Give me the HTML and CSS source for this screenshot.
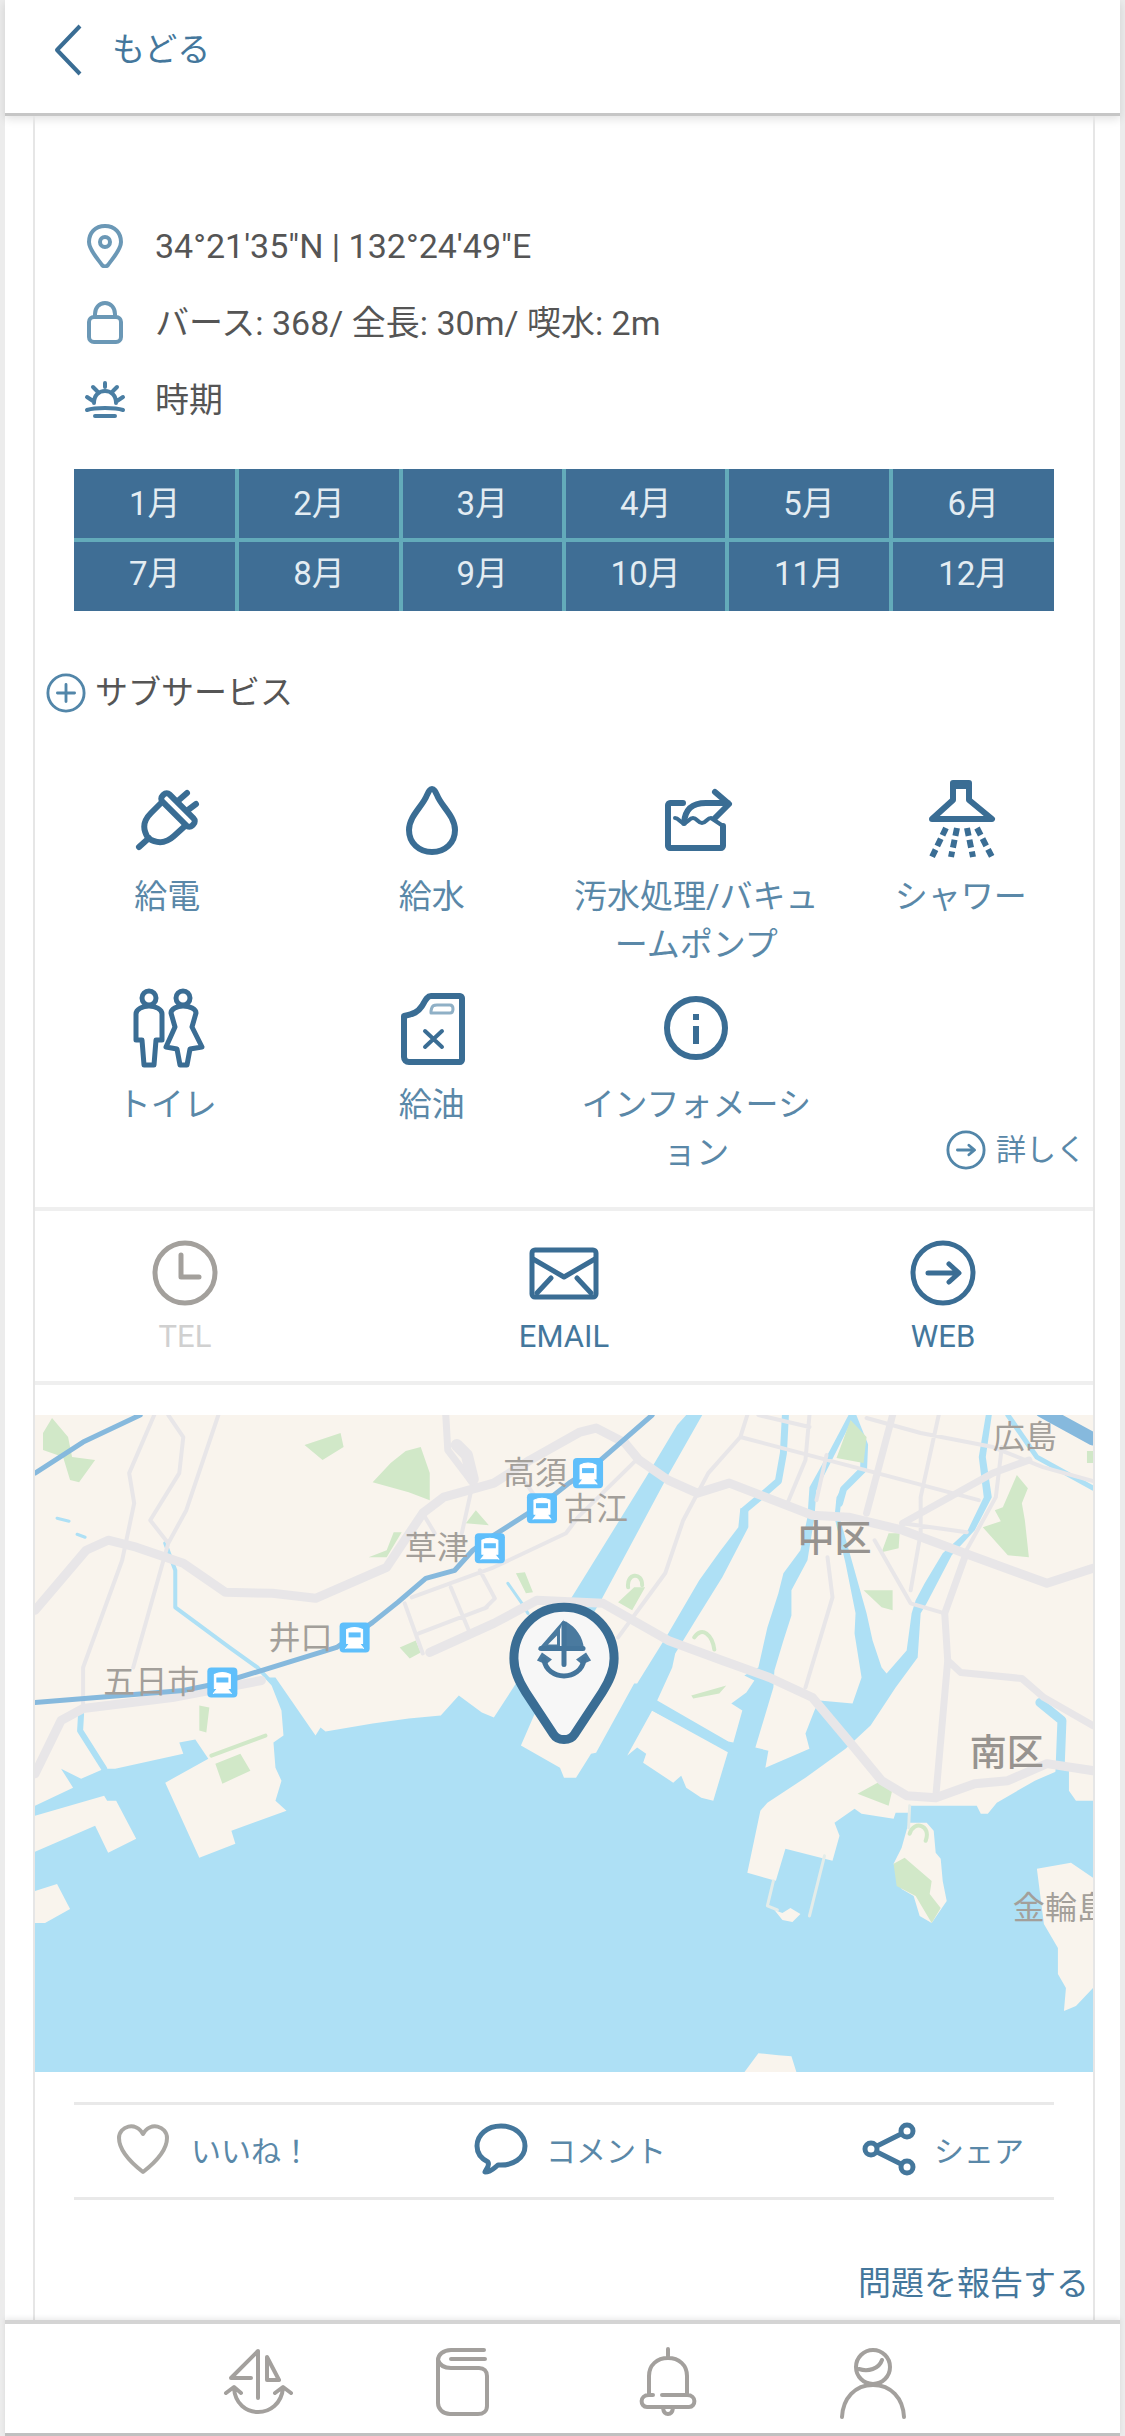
FILE: index.html
```html
<!DOCTYPE html>
<html lang="ja">
<head>
    <meta charset="UTF-8">
    <meta name="viewport" content="width=device-width, initial-scale=1.0">
    <title>マリーナ情報</title>
    <link rel="stylesheet" href="styles.css">
</head>
<body>
    <div class="page">
        <header class="topbar">
            <a href="#" class="back">
                <svg class="icon-back" viewBox="0 0 28 52"><path d="M26 2L3 26l23 24"/></svg>
                もどる
            </a>
        </header>

        <main class="card">
            <ul class="info">
                <li>
                    <svg class="icon-info" viewBox="0 0 44 44"><path d="M22 2C12 2 6 9 6 18c0 8 9 17 13 23 2 2 4 2 6 0 4-6 13-15 13-23C38 9 32 2 22 2z"/><circle cx="22" cy="18" r="5"/></svg>
                    <span>34°21'35"N | 132°24'49"E</span>
                </li>
                <li>
                    <svg class="icon-info" viewBox="0 0 44 44"><rect x="6" y="16" width="32" height="25" rx="5"/><path d="M12 16v-3c0-6 4-11 10-11s10 5 10 11v3"/></svg>
                    <span>バース: 368/ 全長: 30m/ 喫水: 2m</span>
                </li>
                <li>
                    <svg class="icon-info icon-sun" viewBox="0 0 44 44"><path d="M11 25c0-8 5-12 11-12s11 4 11 12M22 5v4M10 9l4 4M34 9l-4 4M4 19l6 4M40 19l-6 4M4 32c6-2 12-2 18-2s12 0 18 2M12 38h20"/></svg>
                    <span>時期</span>
                </li>
            </ul>

            <table class="months">
                <tr><td>1月</td><td>2月</td><td>3月</td><td>4月</td><td>5月</td><td>6月</td></tr>
                <tr><td>7月</td><td>8月</td><td>9月</td><td>10月</td><td>11月</td><td>12月</td></tr>
            </table>

            <h2 class="subtitle">
                <svg class="icon-small" viewBox="0 0 42 42"><circle cx="21" cy="21" r="19"/><path d="M21 12v18M12 21h18"/></svg>
                サブサービス
            </h2>

            <div class="services">
                <div class="service">
                    <svg class="icon-service" viewBox="0 0 80 80"><rect x="-21" y="-5" width="42" height="10" rx="4" transform="translate(51 30) rotate(45)"/><path d="M33 24l-9 9C14 43 17 51 21 58c9 6 17 6 26-2l11-10M22 58l-10 9M52 20l8-7M61 30l8-6"/></svg>
                    <span>給電</span>
                </div>
                <div class="service">
                    <svg class="icon-service" viewBox="0 0 80 80"><path d="M40 9c-2 0-3 2-5 6-4 11-18 21-18 35 0 13 10 22 23 22s23-9 23-22c0-14-14-24-18-35-2-4-3-6-5-6z"/></svg>
                    <span>給水</span>
                </div>
                <div class="service">
                    <svg class="icon-service" viewBox="0 0 80 80"><path d="M27 23H14c-1 0-2 1-2 2v41c0 1 1 2 2 2h51c1 0 2-1 2-2V46"/><path d="M28 43c1-14 8-20 22-20h22M59 12l14 12-14 14"/><path class="thin" d="M19 38c4 0 5 5 9 5s5-5 9-5 5 5 9 5 5-5 9-5l12 8"/></svg>
                    <span>汚水処理/バキュームポンプ</span>
                </div>
                <div class="service">
                    <svg class="icon-service" viewBox="0 0 80 80"><path d="M32 3h16v17l23 19H11l21-19z"/><path d="M32 6h16"/><path class="spray" d="M25 48L11 77M36 48l-6 29M46 48l6 29M56 48l15 29"/></svg>
                    <span>シャワー</span>
                </div>
                <div class="service">
                    <svg class="icon-service" viewBox="0 0 80 80"><g class="wc"><circle cx="22" cy="10" r="7"/><path d="M22 18c-6 0-13 3-13 8v26h6l2 25h10l2-25h6V26c0-5-7-8-13-8z"/><circle cx="56" cy="10" r="7"/><path d="M56 18c-6 0-12 3-12 7l4 14-9 20 11 2 3 16h7l3-16 12-2-10-20 4-14c0-4-6-7-13-7z"/></g></svg>
                    <span>トイレ</span>
                </div>
                <div class="service">
                    <svg class="icon-service" viewBox="0 0 80 80"><path d="M12 28c10-2 14-4 18-10 3-5 5-10 9-10h29c1 0 2 1 2 2v62c0 1-1 2-2 2H17c-3 0-5-2-5-5z"/><path class="thin" d="M33 43l17 16M50 43L33 59"/><path class="handle" d="M39 23c1-6 3-6 6-6h13c4 0 4 8 0 8H39z"/></svg>
                    <span>給油</span>
                </div>
                <div class="service">
                    <svg class="icon-service" viewBox="0 0 80 80"><circle cx="40" cy="40" r="29"/><path class="stem" d="M40 38v18M40 26v6"/></svg>
                    <span>インフォメーション</span>
                </div>
                <a href="#" class="more">
                    <svg class="icon-small" viewBox="0 0 42 42"><circle cx="21" cy="21" r="19"/><path d="M12 21h17M24 16l6 5-6 5"/></svg>
                    詳しく
                </a>
            </div>

            <div class="contact">
                <a class="off" href="#">
                    <svg class="icon-contact" viewBox="0 0 70 70"><circle cx="35" cy="35" r="30"/><path d="M31 17v22h18"/></svg>
                    TEL
                </a>
                <a href="#">
                    <svg class="icon-contact" viewBox="0 0 70 70"><rect x="3" y="12" width="64" height="47" rx="3"/><path d="M4 21l31 18 31-18M22 40L8 55M48 40l14 15"/></svg>
                    EMAIL
                </a>
                <a href="#">
                    <svg class="icon-contact" viewBox="0 0 70 70"><circle cx="35" cy="35" r="30"/><path d="M20 35h30M41 26l10 9-10 9"/></svg>
                    WEB
                </a>
            </div>

            <svg class="map" viewBox="0 0 1056 656" role="img" aria-label="地図">
                <rect class="land" width="1056" height="656"/>

                <!-- sea and wide rivers -->
                <path class="water" d="M0 390L38 372 26 353 46 363 69 353 80 353 148 338 144 327 160 324 173 343 130 367 164 442 200 428 196 415 251 395 240 385 246 365 240 352 238 327 248 320 246 295 233 262 240 262 280 320 285 312 290 316 337 308 373 303 405 300 423 280 446 297 458 302 480 268 537 180 610 62 641 10 650 0 666 0 632 60 565 185 498 300 485 330 524 352 528 362 540 362 555 338 560 337 598 268 601 268 632 218 663 165 683 137 702 112 704 93 712 93 712 112 686 162 661 202 639 238 636 252 621 285 692 326 697 327 706 295 695 288 710 277 718 265 708 260 722 252 731 212 742 178 747 158 764 135 771 102 773 72 792 38 812 0 818 0 797 42 780 75 778 102 771 145 755 175 755 200 747 225 738 255 737 272 719 332 732 335 729 352 773 333 769 318 778 295 783 285 816 288 825 262 818 218 819 198 809 148 798 102 800 82 806 72 803 102 816 148 830 198 836 225 845 252 850 258 870 235 875 198 879 185 888 168 906 138 931 115 947 82 942 42 949 0 955 0 949 42 955 82 938 115 915 140 890 188 884 198 881 242 859 272 834 310 809 333 769 362 731 387 724 395 711 457 740 465 737 473 749 433 796 445 803 420 798 407 818 393 825 398 857 403 859 397 873 397 873 390 940 390 944 398 951 398 960 387 998 365 1021 355 1032 355 1032 375 1039 385 1056 385 1056 656 0 656z"/>
                <path class="land" d="M616 295L591 340 601 332 610 338 607 347 637 367 645 360 650 372 665 382 677 385 692 335z"/>
                <path class="land" d="M0 400L69 380 72 385 81 385 101 423 73 437 60 410 0 436zM0 475L22 468 35 493 10 507 0 507zM708 656L722 637 742 639 755 640 760 656zM872 407L890 407 897 415 899 437 904 443 906 465 910 485 895 507 883 500 877 480 865 473 857 448 865 432zM1000 453L1034 447 1056 462V572L1039 590 1027 595 1029 572 1021 558 1021 532 1007 508zM738 494l8 3 8-5 10 6-8 8-10-2z"/>
                <path class="pier" d="M788 440L773 500M873 390l-1 22M737 465l-6 25 10 4"/>

                <!-- narrow water -->
                <g class="stream">
                    <path d="M749 0l-2 38-5 28-22 19-12 10" stroke-width="7"/>
                    <path d="M816 0l12 30-1 24-20 20-4 14" stroke-width="7"/>
                    <path d="M971 0l29 42 56 31" stroke-width="5"/>
                    <path d="M1003 287l22 18-2 52" stroke-width="9"/>
                    <path d="M130 128l10 27v37l54 40 28 20 15 16" stroke-width="4"/>
                    <path d="M46 298l-1 17 24 38" stroke-width="6"/>
                    <path d="M616 290l80 44" stroke-width="9"/>
                    <path d="M472 168l14 20 6 10M50 122l-8-3M22 103l12 3" stroke-width="3"/>
                </g>

                <!-- parks -->
                <path class="park" d="M8 18L17 3 33 22 37 42 60 45 44 67 35 65 28 42 8 35zM269 30L305 18 308 32 287 45zM337 67L355 48 370 36 385 32 394 58 394 85 373 77zM430 108L440 95 453 110zM333 142L351 135 358 117 366 117 351 142zM480 158L489 157 497 177 490 178zM364 232L380 225 385 237 374 243zM164 290L174 292 171 317 164 315zM180 348L205 338 215 355 187 368zM814 5L830 22 827 48 800 43zM980 60L991 73 985 88 988 105 992 142 971 140 946 112 964 106 958 95 966 92zM852 118h11l-1 15-17 4zM827 175L856 175 856 195 845 192zM582 187L598 172 609 172 596 195zM655 280L690 270 683 278 657 283zM821 378L841 367 856 373 852 390zM857 448L868 442 895 465 893 478 904 492 895 507 879 480 860 470zM1050 36h6v12h-6z"/>
                <path class="park-line" d="M176 340l54-20M873 418c4-14 22-9 16 7M658 222c8-12 18-2 20 12M592 172c-2-14 14-16 14-2"/>

                <!-- roads -->
                <g class="road">
                    <path d="M119 0L94 58l5 30-12 57-39 107v40M133 0l15 22-4 36-29 47 18 23-35 124M183 0l-32 95-18 33M369 188l18 50M376 182l82-30 72-34 12-16 58-57M415 172l18 43M383 218l68-26M444 155l15 28-10 10M426 118l11-50M387 98l12 20M490 68l15 22M711 0l-7 22-32 36-25 47-18 53-47 64M773 0l-4 45-18 43M722 0l51 12M830 3l54 15 72 14 50 20 50 14M704 22l144 38 94 25M902 0l-18 82v36l-10 57M791 142l5 40-27 90M838 125l36 63 34 10M866 108l64 9M790 40l-10 45M965 32l-6 50-31 56" stroke-width="4"/>
                    <path d="M856 0l-26 98M928 142l-20 56 3 47-12 137M911 245l13 12 61 6 22 19 49 28M866 108l90-50 36-13M410 0l2 35 25 33" stroke-width="7"/>
                    <path d="M0 195l51-60 22-10 28 7 47 16 42 29 47 1 43 5 71-31 36-54 21-16 50-14 36-23 50-28 16-4 29 15 14 17 29 20 29 13 32-10 83 32 36 2 54 13 62 23 82 30 46-15" stroke-width="9"/>
                    <path d="M0 358l26-53 22-12 89-11 89-17M394 237l64-29 43-23 66 3 65 37 54 20 47 17 43 20 36 43 33 40 25 15 29 2 39-14 33-3 39-17 46 7" stroke-width="9"/>
                    <path d="M421 30l10 10 6 24" stroke-width="12"/>
                </g>

                <!-- railway -->
                <path class="rail" d="M0 58l48-31L105 0M0 287l148-12 39-8 114-35 36-25 25-20 28-24 29-8 18-20 18-13 50-32 28-22 20-13L616 0"/>
                <path class="rail rail-wide" d="M1005 -4L1056 24"/>

                <!-- stations -->
                <g>
                    <g transform="translate(187 267)"><rect class="st" x="-15" y="-15" width="30" height="30" rx="4"/><path class="train" d="M-8-8q8-4 16 0V6H-8zM-9 11l4-5H5l4 5"/><path class="window" d="M-6-5H6v5H-6z"/></g>
                    <g transform="translate(319 222)"><rect class="st" x="-15" y="-15" width="30" height="30" rx="4"/><path class="train" d="M-8-8q8-4 16 0V6H-8zM-9 11l4-5H5l4 5"/><path class="window" d="M-6-5H6v5H-6z"/></g>
                    <g transform="translate(454 133)"><rect class="st" x="-15" y="-15" width="30" height="30" rx="4"/><path class="train" d="M-8-8q8-4 16 0V6H-8zM-9 11l4-5H5l4 5"/><path class="window" d="M-6-5H6v5H-6z"/></g>
                    <g transform="translate(506 93)"><rect class="st" x="-15" y="-15" width="30" height="30" rx="4"/><path class="train" d="M-8-8q8-4 16 0V6H-8zM-9 11l4-5H5l4 5"/><path class="window" d="M-6-5H6v5H-6z"/></g>
                    <g transform="translate(552 58)"><rect class="st" x="-15" y="-15" width="30" height="30" rx="4"/><path class="train" d="M-8-8q8-4 16 0V6H-8zM-9 11l4-5H5l4 5"/><path class="window" d="M-6-5H6v5H-6z"/></g>
                </g>

                <g class="place">
                    <text x="68" y="277">五日市</text>
                    <text x="233" y="234">井口</text>
                    <text x="369" y="144">草津</text>
                    <text x="467" y="69">高須</text>
                    <text x="528" y="105">古江</text>
                    <text x="956" y="33">広島</text>
                    <text x="976" y="503">金輪島</text>
                </g>
                <g class="ward">
                    <text x="761" y="137">中区</text>
                    <text x="933" y="350">南区</text>
                </g>

                <!-- marina pin -->
                <path class="pin" d="M528 192c-29 0-50 23-50 51 0 13 5 23 12 34l27 41c5 8 17 8 22 0l27-41c7-11 12-21 12-34 0-28-21-51-50-51z"/>
                <path class="pin-fill" d="M528 204l-26 30h22v-20zM530 206c10 6 17 15 18 28h-18zM501 245l5-8 10 7-6 5zM555 245l-5-8-10 7 6 5z"/>
                <path class="pin-line" d="M528 208v41M508 244c3 22 37 22 40 0M505 233h42"/>
                <path class="pin-sail" d="M521 220v9h-9z"/>
            </svg>

            <div class="actions">
                <button type="button">
                    <svg class="icon-action grey" viewBox="0 0 54 54"><path d="M27 50C18 43 3 30 3 16 3 4 20-1 27 12 34-1 51 4 51 16c0 14-15 27-24 34z"/></svg>
                    いいね！
                </button>
                <button type="button">
                    <svg class="icon-action" viewBox="0 0 54 54"><path d="M27 4C13 4 3 13 3 24c0 8 5 13 11 16 2 4-2 7-3 10 6 0 9-4 13-7 15 1 27-7 27-19C51 13 41 4 27 4z"/></svg>
                    コメント
                </button>
                <button type="button">
                    <svg class="icon-action" viewBox="0 0 54 54"><circle cx="9" cy="27" r="6"/><circle cx="45" cy="9" r="6"/><circle cx="45" cy="45" r="6"/><path d="M15 24l24-12M15 30l24 12"/></svg>
                    シェア
                </button>
            </div>

            <a href="#" class="report">問題を報告する</a>
        </main>

        <nav class="tabbar">
            <a href="#" aria-label="マリーナ"><svg class="icon-tab" viewBox="0 0 72 72"><path d="M29 31H9L36 4v47M45 10l12 23H45zM12 41c2 32 46 32 49 0M4 46l8-6 7 6M53 46l8-6 8 6"/></svg></a>
            <a href="#" aria-label="ログブック"><svg class="icon-tab" viewBox="0 0 72 72"><path d="M57 3H24C16 3 11 8 11 13v43c0 6 5 11 12 11h28c5 0 9-3 9-8V29c0-5-3-8-8-8H24c-6 0-11-2-13-8M24 12h34"/></svg></a>
            <a href="#" aria-label="通知"><svg class="icon-tab" viewBox="0 0 72 72"><path d="M36 2v8M21 48h-4V29c0-11 8-18 19-18s19 7 19 18v19H30M17 48c-10 0-9 12-2 12h42c7 0 8-12-2-12M31 61c1 8 9 8 10 0"/></svg></a>
            <a href="#" aria-label="プロフィール"><svg class="icon-tab" viewBox="0 0 72 72"><circle cx="36" cy="20" r="17"/><path d="M22 22c9 3 20 0 23-9M5 70c1-19 13-32 31-32s30 13 31 32"/></svg></a>
        </nav>
    </div>
</body>
</html>
```
FILE: styles.css
```css
* {
    box-sizing: border-box;
}

body {
    font-family: Roboto, "Noto Sans CJK JP", sans-serif;
    background-color: #ececec;
    margin: 0;
    font-size: 33px;
    line-height: 48px;
    color: #555;
}

a {
    color: #44779c;
    text-decoration: none;
}

svg {
    fill: none;
    stroke: #3a6d94;
    stroke-linecap: round;
    stroke-linejoin: round;
    flex-shrink: 0;
}

.page {
    margin: 0 5px;
    min-height: 100vh;
    background-color: #fff;
    display: flex;
    flex-direction: column;
}

.topbar {
    height: 116px;
    padding: 0 48px;
    border-bottom: 3px solid #c6c6c6;
    box-shadow: 0 3px 9px rgba(0, 0, 0, 0.12);
}

.back {
    display: inline-flex;
    align-items: center;
    gap: 29px;
    height: 99px;
}

.icon-back {
    width: 30px;
    height: 52px;
    stroke-width: 4;
    stroke-linecap: butt;
}

.card {
    flex: 1;
    margin: 0 25px 0 28px;
    border: 2px solid #e6e6e6;
    border-width: 0 2px;
    display: flex;
    flex-direction: column;
}

.info {
    list-style: none;
    margin: 0;
    padding: 91px 48px 0;
    font-size: 34px;
}

.info li {
    display: flex;
    align-items: center;
    gap: 28px;
    height: 77px;
}

.icon-info {
    width: 44px;
    height: 44px;
    stroke: #6b98b6;
    stroke-width: 4;
}

.icon-sun {
    stroke: #4a7ea3;
}

.months {
    width: calc(100% - 78px);
    margin: 31px 39px 0;
    border-collapse: collapse;
    table-layout: fixed;
    background-color: #3f6e95;
    color: #e3ecf2;
    text-align: center;
}

.months td {
    height: 71px;
    padding: 0;
    border: 4px solid #63abba;
}

.months tr:first-child td {
    border-top: none;
}

.months tr:last-child td {
    padding-bottom: 6px;
    border-bottom: none;
}

.months td:first-child {
    border-left: none;
}

.months td:last-child {
    border-right: none;
}

.subtitle {
    display: flex;
    align-items: center;
    gap: 9px;
    margin: 58px 11px 0;
    font-size: 33px;
    font-weight: 400;
}

.icon-small {
    width: 40px;
    height: 40px;
    stroke: #5286a9;
    stroke-width: 3;
}

.services {
    display: grid;
    grid-template-columns: repeat(4, 1fr);
    row-gap: 19px;
    margin: 63px 0 30px;
}

.service {
    display: flex;
    flex-direction: column;
    align-items: center;
    gap: 13px;
    min-height: 189px;
    padding: 0 6px;
    text-align: center;
    color: #5a88a8;
    word-break: break-all;
    line-break: anywhere;
}

.icon-service {
    width: 80px;
    height: 80px;
    stroke-width: 6;
}

.icon-service .thin {
    stroke-width: 4;
}

.icon-service .handle {
    stroke: #8fb0c6;
    stroke-width: 3;
}

.icon-service .wc {
    stroke-width: 5;
}

.icon-service .stem {
    stroke-linecap: butt;
}

.icon-service .spray {
    stroke-width: 6;
    stroke-linecap: butt;
    stroke-dasharray: 8 4;
}

.more {
    display: flex;
    align-items: center;
    justify-content: flex-end;
    align-self: end;
    gap: 10px;
    padding: 0 7px 3px 0;
    font-size: 30px;
    color: #5a88a8;
}

.contact {
    display: flex;
    justify-content: space-between;
    padding: 27px 84px 24px;
    border: 4px solid #efefef;
    border-width: 4px 0;
}

.contact a {
    display: flex;
    flex-direction: column;
    align-items: center;
    gap: 8px;
    width: 132px;
    font-size: 31px;
    line-height: 41px;
}

.icon-contact {
    width: 70px;
    height: 70px;
    stroke-width: 5;
}

.contact .off {
    color: #d0d0d0;
}

.off .icon-contact {
    stroke: #a3a09c;
}

.map {
    display: block;
    width: 100%;
    margin-top: 30px;
    stroke: none;
}

.land {
    fill: #f9f4ed;
}

.water {
    fill: #aee0f5;
}

.park {
    fill: #d1e8c8;
}

.park-line {
    stroke: #d1e8c8;
    stroke-width: 4;
}

.pier {
    stroke: #e4ece9;
    stroke-width: 3;
}

.stream {
    stroke: #aee0f5;
}

.road {
    stroke: #e8e6e8;
}

.rail {
    stroke: #86b9dd;
    stroke-width: 5;
}

.rail-wide {
    stroke-width: 13;
}

.st {
    fill: #5fbffb;
}

.train {
    fill: #fff;
    stroke: #fff;
    stroke-width: 1;
}

.window {
    fill: #5fbffb;
}

.place {
    fill: #a39f9a;
    font-size: 32px;
}

.ward {
    fill: #97938f;
    font-size: 37px;
    font-weight: 500;
}

.pin {
    fill: #f7f7f7;
    stroke: #3a6d94;
    stroke-width: 9;
}

.pin-fill {
    fill: #4a7a9f;
}

.pin-line {
    stroke: #44759b;
    stroke-width: 5;
}

.pin-sail {
    fill: #f7f7f7;
}

.actions {
    display: grid;
    grid-template-columns: repeat(3, 1fr);
    margin: 30px 39px 0;
    padding: 0 30px 0 42px;
    border: 3px solid #e9e9e9;
    border-width: 3px 0;
}

.actions button {
    display: flex;
    align-items: center;
    justify-content: center;
    gap: 18px;
    height: 92px;
    padding: 0 0 4px;
    border: none;
    background: none;
    font-family: inherit;
    font-size: 30px;
    color: #5a88a8;
    cursor: pointer;
}

.actions button:first-child {
    justify-content: flex-start;
    gap: 21px;
}

.actions button:last-child {
    justify-content: flex-end;
}

.icon-action {
    width: 54px;
    height: 54px;
    stroke: #44779c;
    stroke-width: 5;
}

.icon-action.grey {
    stroke: #aaa8a4;
    stroke-width: 4;
}

.report {
    align-self: flex-end;
    margin: 60px 4px 9px 0;
}

.tabbar {
    display: grid;
    grid-template-columns: repeat(4, 1fr);
    padding: 0 145px 0 150px;
    height: 116px;
    border-top: 4px solid #d4d4d4;
    border-bottom: 3px solid #c0c0c0;
    box-shadow: 0 -2px 5px rgba(0, 0, 0, 0.08);
}

.tabbar a {
    display: flex;
    align-items: center;
    justify-content: center;
    padding-top: 9px;
}

.icon-tab {
    width: 72px;
    height: 72px;
    stroke: #a3a09d;
    stroke-width: 4;
}
```
